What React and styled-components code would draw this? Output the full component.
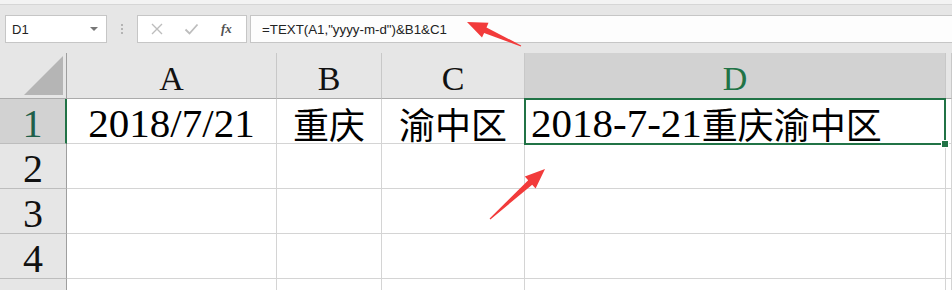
import React from "react";
import styled, { createGlobalStyle } from "styled-components";

const GlobalStyle = createGlobalStyle`
  html, body {
    margin: 0;
    padding: 0;
    background: #fff;
    overflow: hidden;
  }
  * {
    box-sizing: border-box;
  }
`;

const Page = styled.div`
  position: relative;
  width: 952px;
  height: 290px;
  overflow: hidden;
  font-family: "Liberation Sans", Arial, sans-serif;
`;

const TopStrip = styled.div`
  height: 5px;
  background: #f3f3f3;
  border-bottom: 1px solid #d6d6d6;
`;

const FormulaBar = styled.div`
  display: flex;
  align-items: flex-start;
  height: 48px;
  padding-top: 10px;
  background: #e6e6e6;
`;

const NameBox = styled.div`
  display: flex;
  align-items: center;
  justify-content: space-between;
  width: 102px;
  height: 28px;
  margin-left: 5px;
  padding: 0 8px 0 6px;
  background: #fff;
  border: 1px solid #c6c6c6;
  font-size: 13px;
  color: #222;
`;

const DropArrow = styled.span`
  width: 0;
  height: 0;
  border-left: 4px solid transparent;
  border-right: 4px solid transparent;
  border-top: 4px solid #777;
`;

const Grip = styled.div`
  display: flex;
  flex-direction: column;
  align-items: center;
  gap: 2px;
  width: 30px;
  padding-top: 9px;
`;

const Dot = styled.span`
  width: 2px;
  height: 2px;
  background: #b4b4b4;
`;

const ButtonBox = styled.div`
  display: flex;
  align-items: center;
  width: 110px;
  height: 28px;
  padding-left: 12px;
  gap: 20px;
  background: #fff;
  border: 1px solid #c6c6c6;
`;

const Fx = styled.span`
  font-family: "Liberation Serif", serif;
  font-style: italic;
  font-weight: bold;
  font-size: 13px;
  color: #505050;
  margin-left: 2px;
`;

const FormulaInput = styled.div`
  flex: 1;
  height: 28px;
  margin-left: 3px;
  padding-left: 11px;
  display: flex;
  align-items: center;
  background: #fdfdfd;
  border: 1px solid #c6c6c6;
  border-right: none;
  font-size: 13.3px;
  color: #222;
  white-space: pre;
`;

const Sheet = styled.div`
  display: grid;
  grid-template-columns: 67px 210px 105px 143px 421px 1fr;
  grid-template-rows: 46px repeat(5, 45px);
`;

const Corner = styled.div`
  display: flex;
  justify-content: flex-end;
  align-items: flex-end;
  padding: 0 3px 3px 0;
  background: #e6e6e6;
  border-right: 1px solid #9e9e9e;
  border-bottom: 1px solid #ababab;
`;

const Triangle = styled.div`
  width: 39px;
  height: 39px;
  background: #b5b5b5;
  clip-path: polygon(100% 0, 100% 100%, 0 100%);
`;

const ColHead = styled.div`
  display: flex;
  align-items: center;
  justify-content: center;
  padding-top: 6px;
  background: ${(p) => (p.$active ? "#d2d2d2" : "#e6e6e6")};
  border-right: 1px solid #c8c8c8;
  border-bottom: 1px solid #ababab;
  font-family: "Liberation Serif", serif;
  font-size: 34px;
  color: ${(p) => (p.$active ? "#217346" : "#111")};
`;

const RowHead = styled.div`
  display: flex;
  align-items: center;
  justify-content: center;
  padding-top: 4px;
  background: ${(p) => (p.$active ? "#d2d2d2" : "#e6e6e6")};
  border-right: ${(p) => (p.$active ? "2px solid #217346" : "1px solid #9e9e9e")};
  border-bottom: 1px solid #bdbdbd;
  font-family: "Liberation Serif", serif;
  font-size: 40px;
  color: ${(p) => (p.$active ? "#1f5f4a" : "#111")};
`;

const Cell = styled.div`
  position: relative;
  display: flex;
  align-items: center;
  justify-content: ${(p) => (p.$left ? "flex-start" : "center")};
  padding: 3px 0 0 ${(p) => (p.$left ? "6px" : "0")};
  background: #fff;
  border-right: 1px solid #d4d4d4;
  border-bottom: 1px solid #d4d4d4;
  font-family: "Liberation Serif", "Noto Sans CJK SC", serif;
  font-size: 41px;
  color: #000;
  white-space: nowrap;
`;

const Han = styled.span`
  font-family: "Noto Sans CJK SC", sans-serif;
  font-size: 36px;
`;

const Selection = styled.div`
  position: absolute;
  top: -1px;
  left: -1px;
  right: -1px;
  bottom: -2px;
  border: 2px solid #217346;
  z-index: 1;
  pointer-events: none;
`;

const FillHandle = styled.span`
  position: absolute;
  right: -4px;
  bottom: -4px;
  width: 6px;
  height: 6px;
  background: #217346;
  outline: 1px solid #fff;
`;

const Overlay = styled.svg`
  position: absolute;
  left: 0;
  top: 0;
  z-index: 2;
  pointer-events: none;
`;

const arrowPoints = (tail, tip, headLen = 20, headHalf = 8, shaft = 3) => {
  const dx = tip[0] - tail[0];
  const dy = tip[1] - tail[1];
  const len = Math.hypot(dx, dy);
  const ux = dx / len;
  const uy = dy / len;
  const px = -uy;
  const py = ux;
  const bx = tip[0] - ux * headLen;
  const by = tip[1] - uy * headLen;
  const pts = [
    [tail[0] + px * 0.6, tail[1] + py * 0.6],
    [bx + px * shaft, by + py * shaft],
    [bx + px * headHalf, by + py * headHalf],
    tip,
    [bx - px * headHalf, by - py * headHalf],
    [bx - px * shaft, by - py * shaft],
    [tail[0] - px * 0.6, tail[1] - py * 0.6],
  ];
  return pts.map((p) => p.map((v) => v.toFixed(1)).join(",")).join(" ");
};

const columns = ["A", "B", "C", "D"];

const App = () => {
  return (
    <Page>
      <GlobalStyle />
      <TopStrip />
      <FormulaBar>
        <NameBox>
          <span>D1</span>
          <DropArrow />
        </NameBox>
        <Grip>
          <Dot />
          <Dot />
          <Dot />
        </Grip>
        <ButtonBox>
          <svg width="14" height="14" viewBox="0 0 14 14">
            <path d="M2 2 L12 12 M12 2 L2 12" stroke="#bdbdbd" strokeWidth="1.4" fill="none" />
          </svg>
          <svg width="15" height="14" viewBox="0 0 15 14">
            <path d="M1.5 7.5 L5.5 11.5 L13.5 2.5" stroke="#bdbdbd" strokeWidth="1.8" fill="none" />
          </svg>
          <Fx>fx</Fx>
        </ButtonBox>
        <FormulaInput>=TEXT(A1,"yyyy-m-d")&amp;B1&amp;C1</FormulaInput>
      </FormulaBar>

      <Sheet>
        <Corner>
          <Triangle />
        </Corner>
        {columns.map((c) => (
          <ColHead key={c} $active={c === "D"}>
            {c}
          </ColHead>
        ))}
        <ColHead />

        <RowHead $active>1</RowHead>
        <Cell>2018/7/21</Cell>
        <Cell>
          <Han>重庆</Han>
        </Cell>
        <Cell>
          <Han>渝中区</Han>
        </Cell>
        <Cell $left>
          2018-7-21<Han>重庆渝中区</Han>
          <Selection>
            <FillHandle />
          </Selection>
        </Cell>
        <Cell />

        {[2, 3, 4, 5].map((r) => (
          <React.Fragment key={r}>
            {/* row 5 is cut by the window edge, its number is not visible */}
            <RowHead>{r < 5 ? r : ""}</RowHead>
            <Cell />
            <Cell />
            <Cell />
            <Cell />
            <Cell />
          </React.Fragment>
        ))}
      </Sheet>

      <Overlay width="952" height="290">
        <polygon points={arrowPoints([521, 46], [467, 22])} fill="#f23b3b" />
        <polygon points={arrowPoints([490, 219], [545, 169])} fill="#f23b3b" />
      </Overlay>
    </Page>
  );
};

export default App;
